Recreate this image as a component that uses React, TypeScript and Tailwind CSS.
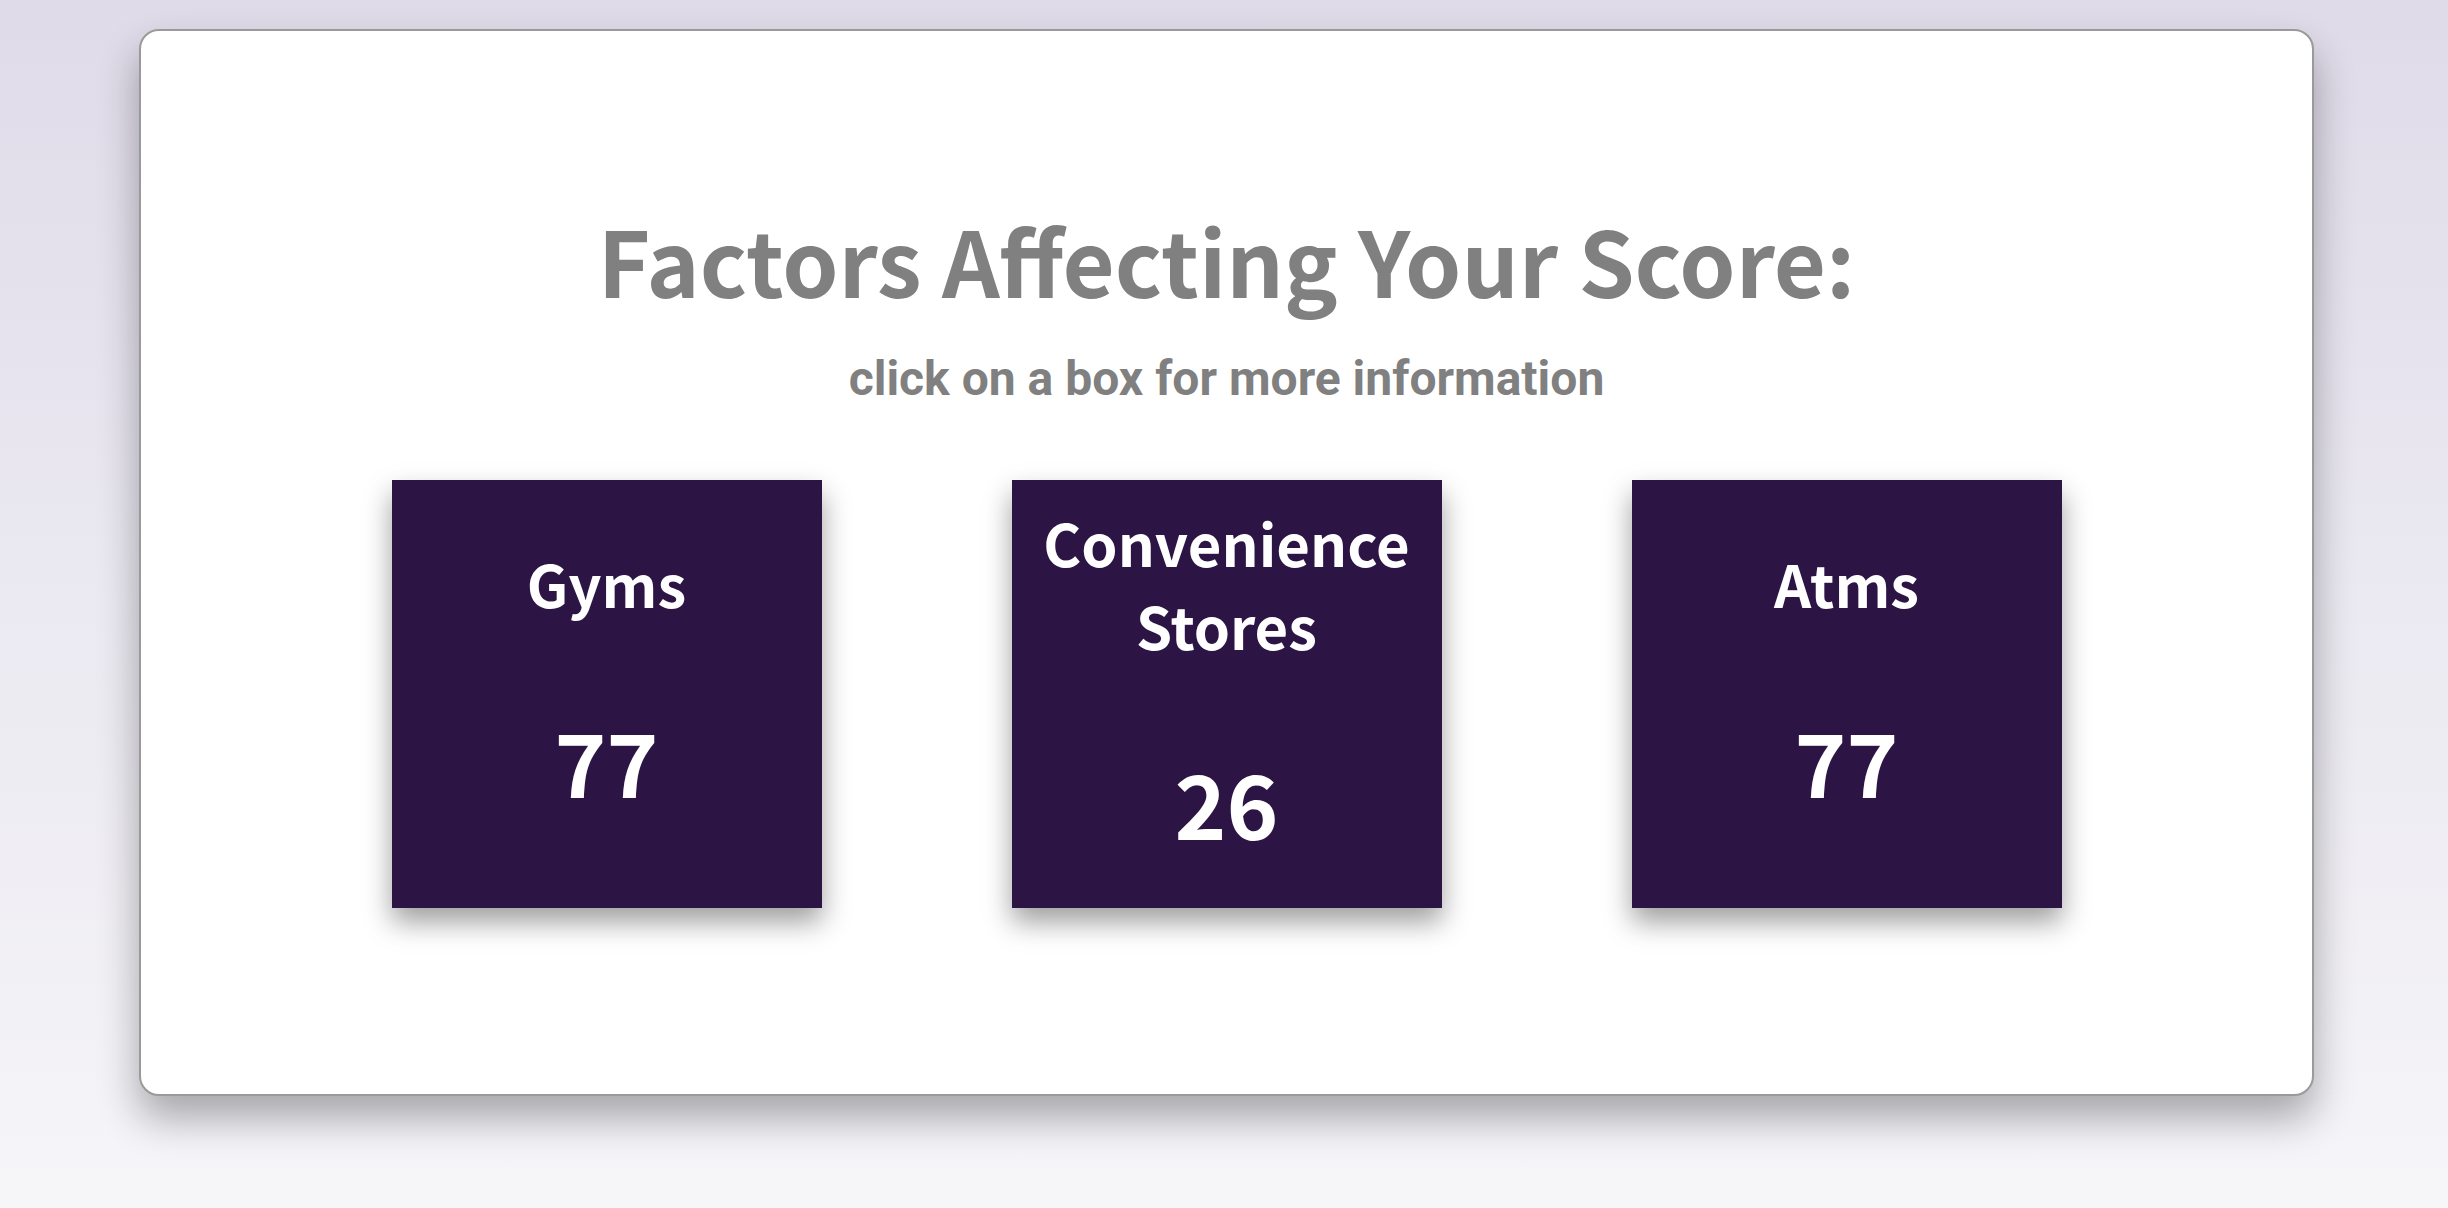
import React from 'react'

interface Factor {
  label: string
  score: number
}

const factors: Factor[] = [
  { label: 'Gyms', score: 77 },
  { label: 'Convenience Stores', score: 26 },
  { label: 'Atms', score: 77 },
]

const sourceSans = { fontFamily: '"Noto Sans CJK SC", "Noto Sans", sans-serif' }

function FactorBox({ label, score }: Factor) {
  return (
    <button
      type="button"
      className="w-[430px] h-[428px] bg-[#2c1445] flex flex-col items-center justify-center px-[30px] pb-[36px] text-white text-center shadow-[0_14px_26px_rgba(0,0,0,0.38)] cursor-pointer"
      style={sourceSans}
    >
      <span className="text-[58px] leading-[83px] font-bold">{label}</span>
      <span className="text-[88px] leading-[100px] font-bold mt-[85px]">{score}</span>
    </button>
  )
}

export default function App() {
  return (
    <div className="min-h-[1208px] w-full bg-gradient-to-b from-[#dfdbe9] via-[#ebe9f1] to-[#f6f5f8] pt-[29px] pl-[139px] pr-[134px]">
      <div className="h-[1067px] bg-white border-2 border-[#9a9a9a] rounded-[20px] shadow-[0_22px_40px_rgba(0,0,0,0.32)] flex flex-col items-center pt-[168px]">
        <h1
          className="text-[90px] leading-[120px] font-bold text-[#808080]"
          style={sourceSans}
        >
          Factors Affecting Your Score:
        </h1>
        <p
          className="mt-[32px] text-[48px] leading-[56px] font-bold text-[#808080]"
          style={{ fontFamily: 'Roboto, "Liberation Sans", sans-serif' }}
        >
          click on a box for more information
        </p>
        <div className="mt-[73px] flex gap-[190px]">
          {factors.map(f => (
            <FactorBox key={f.label} {...f} />
          ))}
        </div>
      </div>
    </div>
  )
}
